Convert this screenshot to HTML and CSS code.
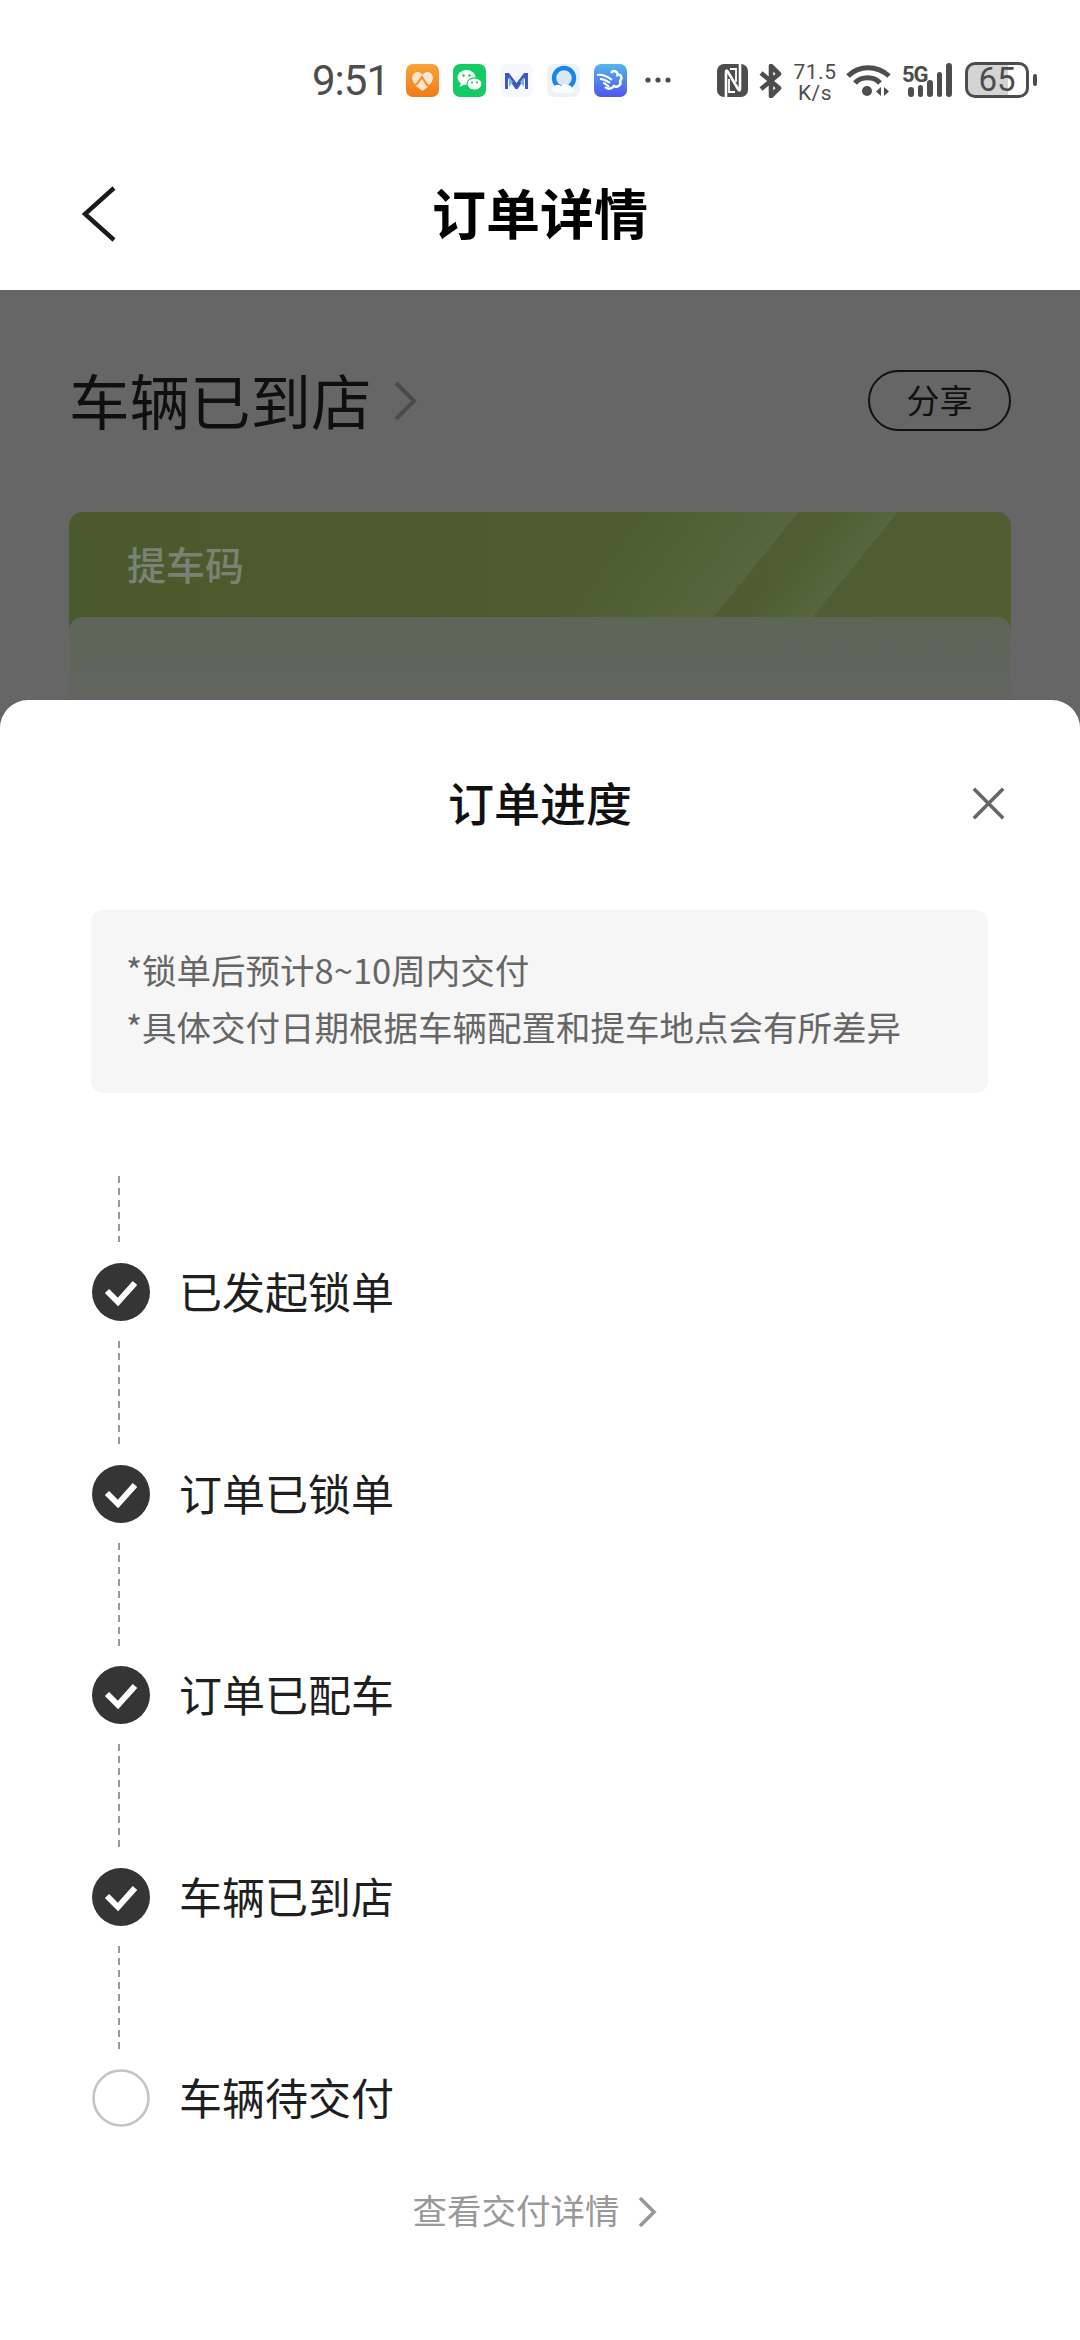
FILE: index.html
```html
<!DOCTYPE html>
<html lang="zh-CN">
<head>
  <meta charset="UTF-8">
  <meta name="viewport" content="width=device-width, initial-scale=1.0">
  <title>订单详情</title>
  <link rel="stylesheet" href="styles.css">
</head>
<body>
  <div class="status-bar">
    <span class="time">9:51</span>
    <div class="app-icons">
      <svg class="app-icon" viewBox="0 0 33 33">
        <defs><linearGradient id="orange" x1="0" y1="0" x2="0" y2="1"><stop offset="0" stop-color="#f9a437"/><stop offset="1" stop-color="#f07a16"/></linearGradient></defs>
        <rect width="33" height="33" rx="7" fill="url(#orange)"/>
        <path d="M16.5 27 C8 21 5 16 6.5 11.5 C8.5 6.5 14.5 7 16.5 11 C18.5 7 24.5 6.5 26.5 11.5 C28 16 25 21 16.5 27Z" fill="#fde6cf"/>
        <path d="M0 21 C5 19 8 22 11 20 L16 13 L21 21 C25 23 29 20 33 21" fill="none" stroke="#f58a24" stroke-width="2"/>
      </svg>
      <svg class="app-icon" viewBox="0 0 33 33">
        <rect width="33" height="33" rx="7" fill="#15cb63"/>
        <ellipse cx="13.5" cy="13.5" rx="9" ry="7.5" fill="#fff"/>
        <path d="M8 18 L7 23 L12 20Z" fill="#fff"/>
        <ellipse cx="21.5" cy="20" rx="7.5" ry="6.2" fill="#fff" stroke="#15cb63" stroke-width="1.2"/>
        <circle cx="10.5" cy="11.5" r="1.3" fill="#15cb63"/>
        <circle cx="16.5" cy="11.5" r="1.3" fill="#15cb63"/>
        <circle cx="19" cy="18.5" r="1.1" fill="#15cb63"/>
        <circle cx="24" cy="18.5" r="1.1" fill="#15cb63"/>
      </svg>
      <svg class="app-icon" viewBox="0 0 33 33">
        <rect width="33" height="33" rx="7" fill="#f6f8fd"/>
        <path d="M5 9 H9 L16.5 19 L24 9 H28 V25 H25 V14 L17.5 25 H15.5 L8 14 V25 H5Z" fill="#3f56c4"/>
        <path d="M9 13 L13 18 L9 23Z M24 13 L20 18 L24 23Z" fill="#6fb6ee"/>
      </svg>
      <svg class="app-icon" viewBox="0 0 33 33">
        <rect width="33" height="33" rx="7" fill="#edf2f8"/>
        <circle cx="17" cy="14" r="10" fill="#dde7f1" stroke="#1487ea" stroke-width="4.4"/>
        <path d="M6 24 C7 20 12 20 14 22 C17 19 24 20 25 24 C28 25 28 29 24 29 H9 C5 29 4 25 6 24Z" fill="#fafcff"/>
      </svg>
      <svg class="app-icon" viewBox="0 0 33 33">
        <defs><linearGradient id="sky" x1="0" y1="0" x2="0" y2="1"><stop offset="0" stop-color="#54b6ea"/><stop offset="1" stop-color="#4e55ee"/></linearGradient></defs>
        <rect width="33" height="33" rx="7" fill="url(#sky)"/>
        <path d="M17 9 C20 5 24 8 23.5 11 C27 10 29 14 26 17 C28 21 23 24 20 22 C17 26 13 25 11 23" fill="none" stroke="#fff" stroke-width="2.4"/>
        <path d="M3 11 C9 10 14 13 18 16 M6 15 C10 15 13 17 16 19 M9 19 C11 19 13 21 15 23" fill="none" stroke="#fff" stroke-width="2"/>
      </svg>
      <svg class="more-dots" viewBox="0 0 26 6">
        <circle cx="3" cy="3" r="2.6"/><circle cx="13" cy="3" r="2.6"/><circle cx="23" cy="3" r="2.6"/>
      </svg>
    </div>
    <div class="sys-icons">
      <svg class="nfc" viewBox="0 0 31 33">
        <rect width="31" height="33" rx="7" fill="#4d4d4d"/>
        <path d="M9 33 V8 Q9 5 11 8 L21 25 Q23 28 23 25 V0" fill="none" stroke="#fff" stroke-width="2.6"/>
        <path d="M13 5 H19 V18 M12 15 V28 H18" fill="none" stroke="#fff" stroke-width="1.8"/>
      </svg>
      <svg class="bluetooth" viewBox="0 0 24 34">
        <path d="M2 9 L20 24 L12 32 V2 L20 10 L2 25" fill="none" stroke="#4d4d4d" stroke-width="4.6" stroke-linejoin="round"/>
      </svg>
      <div class="net-speed"><span>71.5</span><span>K/s</span></div>
      <svg class="wifi" viewBox="0 0 45 34">
        <path d="M2 13 C13 2 31 2 43 13" fill="none" stroke="#4d4d4d" stroke-width="5"/>
        <path d="M9 20 C15 13 28 13 34 20" fill="none" stroke="#4d4d4d" stroke-width="5"/>
        <circle cx="21" cy="28" r="5" fill="#4d4d4d"/>
        <path d="M35 24 V33 L30 28.5Z M38 24 V33 L43 28.5Z" fill="#4d4d4d"/>
      </svg>
      <div class="signal">
        <span class="signal-type">5G</span>
        <div class="signal-bars">
          <i class="bar bar-1"></i><i class="bar bar-2"></i><i class="bar bar-3"></i><i class="bar bar-4"></i><i class="bar bar-5"></i>
        </div>
      </div>
      <div class="battery">
        <div class="battery-body"><span>65</span></div>
        <i class="battery-nub"></i>
      </div>
    </div>
  </div>

  <div class="nav-bar">
    <svg class="back" viewBox="0 0 36 56"><path d="M33 2 L4 28 L33 54" fill="none" stroke="#1a1a1a" stroke-width="4.4"/></svg>
    <h1>订单详情</h1>
  </div>

  <div class="main">
    <div class="dim-page">
      <div class="order-head">
        <div class="order-status">
          <span>车辆已到店</span>
          <svg class="status-arrow" viewBox="0 0 24 40"><path d="M3 2 L21 20 L3 38" fill="none" stroke="#4a4a4a" stroke-width="4"/></svg>
        </div>
        <div class="share">分享</div>
      </div>
      <div class="pickup-card">
        <div class="pickup-title">提车码</div>
        <div class="pickup-inner"><div class="pickup-dots"></div></div>
      </div>
    </div>

    <div class="sheet">
      <div class="sheet-head">
        <h2>订单进度</h2>
        <svg class="close" viewBox="0 0 36 36"><path d="M2 2 L34 34 M34 2 L2 34" stroke="#666" stroke-width="3.8"/></svg>
      </div>

      <div class="notice">
        <p>*锁单后预计8~10周内交付</p>
        <p>*具体交付日期根据车辆配置和提车地点会有所差异</p>
      </div>

      <div class="timeline">
        <div class="dash dash-first"></div>
        <div class="step">
          <svg class="dot" viewBox="0 0 58 58"><circle cx="29" cy="29" r="29" fill="#353535"/><path d="M15 28 L26 39 L43 20" fill="none" stroke="#fff" stroke-width="6"/></svg>
          <span>已发起锁单</span>
        </div>
        <div class="dash"></div>
        <div class="step">
          <svg class="dot" viewBox="0 0 58 58"><circle cx="29" cy="29" r="29" fill="#353535"/><path d="M15 28 L26 39 L43 20" fill="none" stroke="#fff" stroke-width="6"/></svg>
          <span>订单已锁单</span>
        </div>
        <div class="dash"></div>
        <div class="step">
          <svg class="dot" viewBox="0 0 58 58"><circle cx="29" cy="29" r="29" fill="#353535"/><path d="M15 28 L26 39 L43 20" fill="none" stroke="#fff" stroke-width="6"/></svg>
          <span>订单已配车</span>
        </div>
        <div class="dash"></div>
        <div class="step">
          <svg class="dot" viewBox="0 0 58 58"><circle cx="29" cy="29" r="29" fill="#353535"/><path d="M15 28 L26 39 L43 20" fill="none" stroke="#fff" stroke-width="6"/></svg>
          <span>车辆已到店</span>
        </div>
        <div class="dash"></div>
        <div class="step">
          <svg class="dot" viewBox="0 0 58 58"><circle cx="29" cy="29" r="27.5" fill="#fff" stroke="#c4c4c4" stroke-width="2.6"/></svg>
          <span>车辆待交付</span>
        </div>
      </div>

      <div class="delivery-link">
        <span>查看交付详情</span>
        <svg viewBox="0 0 20 32"><path d="M3 2 L17 16 L3 30" fill="none" stroke="#999" stroke-width="3.6"/></svg>
      </div>
    </div>
  </div>
</body>
</html>
```

FILE: styles.css
```css
* {
  box-sizing: border-box;
}

html, body {
  margin: 0;
  padding: 0;
}

body {
  width: 1080px;
  height: 2340px;
  overflow: hidden;
  background-color: #fff;
  font-family: "Noto Sans CJK SC", "Noto Sans", sans-serif;
}

h1, h2, p {
  margin: 0;
  font-weight: normal;
}

/* status bar */
.status-bar {
  display: flex;
  align-items: flex-start;
  height: 134px;
  padding: 62px 0 0 312px;
  color: #4d4d4d;
}

.time {
  width: 78px;
  margin-right: 16px;
  font-family: Roboto, sans-serif;
  font-size: 42px;
  line-height: 37px;
  letter-spacing: -1px;
  white-space: nowrap;
}

.app-icons {
  display: flex;
  align-items: center;
  gap: 14px;
  padding-top: 2px;
}

.app-icon {
  display: block;
  width: 33px;
  height: 33px;
}

.more-dots {
  display: block;
  width: 26px;
  height: 6px;
  margin-left: 4px;
  margin-bottom: 2px;
  fill: #4d4d4d;
}

.sys-icons {
  display: flex;
  align-items: flex-start;
  margin-left: 46px;
}

.nfc {
  display: block;
  width: 31px;
  height: 33px;
  margin-top: 2px;
}

.bluetooth {
  display: block;
  width: 24px;
  height: 34px;
  margin: 2px 0 0 11px;
}

.net-speed {
  display: flex;
  flex-direction: column;
  align-items: center;
  width: 46px;
  margin-left: 9px;
  font-family: Roboto, sans-serif;
  font-size: 21px;
  line-height: 21px;
  letter-spacing: 0.5px;
}

.wifi {
  display: block;
  width: 45px;
  height: 34px;
  margin: 1px 0 0 8px;
}

.signal {
  display: flex;
  position: relative;
  width: 50px;
  height: 36px;
  margin-left: 10px;
}

.signal-type {
  font-family: Roboto, sans-serif;
  font-size: 22px;
  font-weight: 700;
  line-height: 20px;
  letter-spacing: -1px;
  margin-top: 3px;
  margin-left: 1px;
}

/* bars sit partly under the 5G label */
.signal-bars {
  position: absolute;
  left: 7px;
  top: 1px;
  display: flex;
  align-items: flex-end;
  gap: 4px;
  height: 34px;
}

.bar {
  display: block;
  width: 5.5px;
  background-color: #4d4d4d;
  border-radius: 3px;
}

.bar-1 { height: 10px; }
.bar-2 { height: 12px; }
.bar-3 { height: 17px; }
.bar-4 { height: 25px; }
.bar-5 { height: 34px; }

.battery {
  display: flex;
  align-items: center;
  margin-left: 14px;
}

.battery-body {
  display: flex;
  align-items: center;
  justify-content: center;
  width: 64px;
  height: 36px;
  border: 3px solid #4d4d4d;
  border-radius: 10px;
  background: linear-gradient(to right, #d4d4d4 69%, #fff 69%);
  font-family: Roboto, sans-serif;
  font-size: 33px;
  line-height: 30px;
}

.battery-nub {
  display: block;
  width: 4px;
  height: 12px;
  margin-left: 4px;
  background-color: #4d4d4d;
  border-radius: 2px;
}

/* nav */
.nav-bar {
  display: flex;
  align-items: center;
  justify-content: center;
  position: relative;
  height: 156px;
}

.nav-bar h1 {
  font-size: 54px;
  font-weight: 700;
  line-height: 70px;
  color: #000;
}

.back {
  position: absolute;
  left: 81px;
  top: 52px;
  width: 36px;
  height: 56px;
}

/* dimmed page behind the sheet */
.main {
  background-color: #666;
}

.dim-page {
  height: 410px;
  padding: 80px 69px 0;
  overflow: hidden;
}

.order-head {
  display: flex;
  align-items: center;
  justify-content: space-between;
  height: 61px;
}

.order-status {
  display: flex;
  align-items: center;
  gap: 21px;
  font-size: 60.5px;
  line-height: 61px;
  color: #0f0f0f;
}

.order-status span {
  padding-bottom: 5px;
}

.status-arrow {
  display: block;
  width: 24px;
  height: 40px;
}

.share {
  width: 143px;
  height: 61px;
  border: 2px solid #111;
  border-radius: 31px;
  font-size: 33px;
  line-height: 55px;
  text-align: center;
  color: #111;
}

.pickup-card {
  height: 188px;
  margin-top: 81px;
  border-radius: 14px 14px 0 0;
  background:
    linear-gradient(129deg, transparent 590px, rgba(255, 255, 255, 0.05) 644px, transparent 644px),
    linear-gradient(129deg, transparent 440px, rgba(255, 255, 255, 0.05) 567px, transparent 567px),
    linear-gradient(to right, #4a5a2d, #4f5f33);
  overflow: hidden;
}

.pickup-title {
  height: 105px;
  padding: 27px 0 0 58px;
  font-size: 39px;
  font-weight: 500;
  line-height: 48px;
  color: #7a8273;
}

.pickup-inner {
  height: 83px;
  padding-top: 32px;
  border-radius: 14px 14px 0 0;
  background: linear-gradient(to bottom, #5c6658, #63655f);
}

.pickup-dots {
  margin-left: 650px;
  border-top: 3px dotted rgba(85, 96, 88, 0.35);
}

/* bottom sheet */
.sheet {
  height: 1640px;
  background-color: #fff;
  border-radius: 28px 28px 0 0;
  overflow: hidden;
}

.sheet-head {
  display: grid;
  grid-template-columns: 1fr auto 1fr;
  align-items: center;
  height: 62px;
  margin-top: 70px;
}

.sheet-head h2 {
  grid-column: 2;
  padding-bottom: 3px;
  font-size: 46px;
  font-weight: 500;
  line-height: 62px;
  color: #111;
}

.close {
  justify-self: end;
  width: 33px;
  height: 33px;
  margin: 1px 75px 0 0;
}

.notice {
  height: 183px;
  margin: 78px 92px 0 91px;
  padding: 31px 35px 0;
  background-color: #f6f6f6;
  border-radius: 12px;
  font-size: 34.5px;
  line-height: 57px;
  color: #666;
  white-space: nowrap;
}

/* progress list */
.timeline {
  margin-top: 83px;
  padding-left: 92px;
}

.dash {
  width: 2px;
  height: 103.5px;
  margin: 20px 0 20px 26px;
  background: repeating-linear-gradient(to bottom, #999 0, #999 7px, transparent 7px, transparent 12px);
}

.dash-first {
  height: 66px;
  margin: 0 0 21px 26px;
}

.step {
  display: flex;
  align-items: center;
  gap: 29px;
  height: 58px;
  font-size: 43px;
  line-height: 58px;
  color: #1f1f1f;
}

.step span {
  padding-bottom: 4px;
}

.dot {
  display: block;
  width: 58px;
  height: 58px;
  flex-shrink: 0;
}

.delivery-link {
  display: flex;
  align-items: center;
  justify-content: center;
  gap: 17px;
  height: 50px;
  margin-top: 58px;
  padding-right: 11px;
  font-size: 34.5px;
  line-height: 50px;
  color: #999;
}

.delivery-link span {
  padding-bottom: 2px;
}

.delivery-link svg {
  display: block;
  width: 20px;
  height: 32px;
  margin-top: 4px;
}
```
